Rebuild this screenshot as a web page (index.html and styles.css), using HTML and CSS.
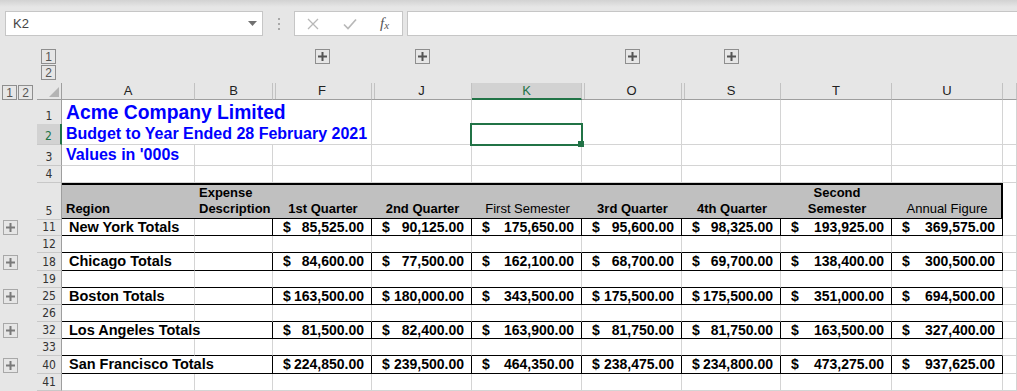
FILE: index.html
```html
<!DOCTYPE html>
<html lang="en">
<head>
  <meta charset="UTF-8">
  <title>Budget to Year Ended 28 February 2021</title>
  <link rel="stylesheet" href="styles.css">
</head>
<body>
  <div class="formula-bar">
    <div class="name-box">
      <span>K2</span>
      <svg class="caret" width="9" height="5" viewBox="0 0 9 5"><path d="M0 0h9L4.5 5z" fill="#707070"/></svg>
    </div>
    <div class="grip"><i></i><i></i><i></i></div>
    <div class="fx-group">
      <svg class="x-icon" width="12" height="12" viewBox="0 0 12 12"><path d="M1 1l10 10M11 1L1 11" stroke="#b8b8b8" stroke-width="1.3"/></svg>
      <svg class="ok-icon" width="14" height="12" viewBox="0 0 14 12"><path d="M1 6.5l4 4L13 1.5" fill="none" stroke="#b8b8b8" stroke-width="1.7"/></svg>
      <span class="fx"><i>f</i><sub>x</sub></span>
    </div>
    <div class="formula-input"></div>
  </div>

  <!-- column outline (grouped columns) -->
  <div class="grid outline">
    <div></div>
    <div class="levels-col"><span class="ob">1</span><span class="ob">2</span></div>
    <div></div>
    <div></div>
    <div class="oc"><span class="ob"><svg width="9" height="9" viewBox="0 0 9 9"><path d="M0 4.5h9M4.5 0v9" stroke="#555" stroke-width="2"/></svg></span></div>
    <div class="oc"><span class="ob"><svg width="9" height="9" viewBox="0 0 9 9"><path d="M0 4.5h9M4.5 0v9" stroke="#555" stroke-width="2"/></svg></span></div>
    <div></div>
    <div class="oc"><span class="ob"><svg width="9" height="9" viewBox="0 0 9 9"><path d="M0 4.5h9M4.5 0v9" stroke="#555" stroke-width="2"/></svg></span></div>
    <div class="oc"><span class="ob"><svg width="9" height="9" viewBox="0 0 9 9"><path d="M0 4.5h9M4.5 0v9" stroke="#555" stroke-width="2"/></svg></span></div>
    <div></div>
    <div></div>
    <div></div>
  </div>

  <div class="sheet">
    <div class="grid row head">
      <div class="gut levels-row"><span class="ob">1</span><span class="ob">2</span></div>
      <div class="corner"><svg width="10" height="10" viewBox="0 0 10 10"><path d="M10 0v10H0z" fill="#b4b4b4"/></svg></div>
      <div class="hd">A</div>
      <div class="hd">B</div>
      <div class="hd split">F</div>
      <div class="hd split">J</div>
      <div class="hd sel">K</div>
      <div class="hd split">O</div>
      <div class="hd split">S</div>
      <div class="hd">T</div>
      <div class="hd">U</div>
      <div class="hd"></div>
    </div>

    <div class="grid row r1">
      <div class="gut"></div>
      <div class="rh">1</div>
      <div class="c title big span3">Acme Company Limited</div>
      <div class="c"></div><div class="c"></div><div class="c"></div><div class="c"></div>
      <div class="c"></div><div class="c"></div><div class="c"></div>
    </div>

    <div class="grid row r2">
      <div class="gut"></div>
      <div class="rh cur-row">2</div>
      <div class="c title span3">Budget to Year Ended 28 February 2021</div>
      <div class="c"></div><div class="c cur"></div><div class="c"></div><div class="c"></div>
      <div class="c"></div><div class="c"></div><div class="c"></div>
    </div>

    <div class="grid row r2">
      <div class="gut"></div>
      <div class="rh">3</div>
      <div class="c title">Values in '000s</div>
      <div class="c"></div><div class="c"></div><div class="c"></div><div class="c"></div><div class="c"></div>
      <div class="c"></div><div class="c"></div><div class="c"></div><div class="c"></div>
    </div>

    <div class="grid row">
      <div class="gut"></div>
      <div class="rh">4</div>
      <div class="c"></div><div class="c"></div><div class="c"></div><div class="c"></div><div class="c"></div>
      <div class="c"></div><div class="c"></div><div class="c"></div><div class="c"></div><div class="c"></div>
    </div>

    <div class="grid row band">
      <div class="gut"></div>
      <div class="rh">5</div>
      <div class="c th">Region</div>
      <div class="c th">Expense<br>Description</div>
      <div class="c th mid">1st Quarter</div>
      <div class="c th mid">2nd Quarter</div>
      <div class="c th mid light">First Semester</div>
      <div class="c th mid">3rd Quarter</div>
      <div class="c th mid">4th Quarter</div>
      <div class="c th mid">Second<br>Semester</div>
      <div class="c th mid light last">Annual Figure</div>
      <div class="c out"></div>
    </div>

    <div class="grid row tot">
      <div class="gut"><span class="ob soft"><svg width="9" height="9" viewBox="0 0 9 9"><path d="M0 4.5h9M4.5 0v9" stroke="#7a7a7a" stroke-width="2"/></svg></span></div>
      <div class="rh">11</div>
      <div class="c name">New York Totals</div>
      <div class="c"></div>
      <div class="c num"><span>$</span><span>85,525.00</span></div>
      <div class="c num"><span>$</span><span>90,125.00</span></div>
      <div class="c num"><span>$</span><span>175,650.00</span></div>
      <div class="c num"><span>$</span><span>95,600.00</span></div>
      <div class="c num"><span>$</span><span>98,325.00</span></div>
      <div class="c num"><span>$</span><span>193,925.00</span></div>
      <div class="c num"><span>$</span><span>369,575.00</span></div>
      <div class="c out"></div>
    </div>

    <div class="grid row gap">
      <div class="gut"></div>
      <div class="rh">12</div>
      <div class="c"></div><div class="c"></div><div class="c"></div><div class="c"></div><div class="c"></div>
      <div class="c"></div><div class="c"></div><div class="c"></div><div class="c"></div><div class="c out"></div>
    </div>

    <div class="grid row tot tall">
      <div class="gut"><span class="ob soft"><svg width="9" height="9" viewBox="0 0 9 9"><path d="M0 4.5h9M4.5 0v9" stroke="#7a7a7a" stroke-width="2"/></svg></span></div>
      <div class="rh">18</div>
      <div class="c name">Chicago Totals</div>
      <div class="c"></div>
      <div class="c num"><span>$</span><span>84,600.00</span></div>
      <div class="c num"><span>$</span><span>77,500.00</span></div>
      <div class="c num"><span>$</span><span>162,100.00</span></div>
      <div class="c num"><span>$</span><span>68,700.00</span></div>
      <div class="c num"><span>$</span><span>69,700.00</span></div>
      <div class="c num"><span>$</span><span>138,400.00</span></div>
      <div class="c num"><span>$</span><span>300,500.00</span></div>
      <div class="c out"></div>
    </div>

    <div class="grid row gap">
      <div class="gut"></div>
      <div class="rh">19</div>
      <div class="c"></div><div class="c"></div><div class="c"></div><div class="c"></div><div class="c"></div>
      <div class="c"></div><div class="c"></div><div class="c"></div><div class="c"></div><div class="c out"></div>
    </div>

    <div class="grid row tot">
      <div class="gut"><span class="ob soft"><svg width="9" height="9" viewBox="0 0 9 9"><path d="M0 4.5h9M4.5 0v9" stroke="#7a7a7a" stroke-width="2"/></svg></span></div>
      <div class="rh">25</div>
      <div class="c name">Boston Totals</div>
      <div class="c"></div>
      <div class="c num"><span>$</span><span>163,500.00</span></div>
      <div class="c num"><span>$</span><span>180,000.00</span></div>
      <div class="c num"><span>$</span><span>343,500.00</span></div>
      <div class="c num"><span>$</span><span>175,500.00</span></div>
      <div class="c num"><span>$</span><span>175,500.00</span></div>
      <div class="c num"><span>$</span><span>351,000.00</span></div>
      <div class="c num"><span>$</span><span>694,500.00</span></div>
      <div class="c out"></div>
    </div>

    <div class="grid row gap">
      <div class="gut"></div>
      <div class="rh">26</div>
      <div class="c"></div><div class="c"></div><div class="c"></div><div class="c"></div><div class="c"></div>
      <div class="c"></div><div class="c"></div><div class="c"></div><div class="c"></div><div class="c out"></div>
    </div>

    <div class="grid row tot">
      <div class="gut"><span class="ob soft"><svg width="9" height="9" viewBox="0 0 9 9"><path d="M0 4.5h9M4.5 0v9" stroke="#7a7a7a" stroke-width="2"/></svg></span></div>
      <div class="rh">32</div>
      <div class="c name span2">Los Angeles Totals</div>
      <div class="c num"><span>$</span><span>81,500.00</span></div>
      <div class="c num"><span>$</span><span>82,400.00</span></div>
      <div class="c num"><span>$</span><span>163,900.00</span></div>
      <div class="c num"><span>$</span><span>81,750.00</span></div>
      <div class="c num"><span>$</span><span>81,750.00</span></div>
      <div class="c num"><span>$</span><span>163,500.00</span></div>
      <div class="c num"><span>$</span><span>327,400.00</span></div>
      <div class="c out"></div>
    </div>

    <div class="grid row gap">
      <div class="gut"></div>
      <div class="rh">33</div>
      <div class="c"></div><div class="c"></div><div class="c"></div><div class="c"></div><div class="c"></div>
      <div class="c"></div><div class="c"></div><div class="c"></div><div class="c"></div><div class="c out"></div>
    </div>

    <div class="grid row tot tall">
      <div class="gut"><span class="ob soft"><svg width="9" height="9" viewBox="0 0 9 9"><path d="M0 4.5h9M4.5 0v9" stroke="#7a7a7a" stroke-width="2"/></svg></span></div>
      <div class="rh">40</div>
      <div class="c name span2">San Francisco Totals</div>
      <div class="c num"><span>$</span><span>224,850.00</span></div>
      <div class="c num"><span>$</span><span>239,500.00</span></div>
      <div class="c num"><span>$</span><span>464,350.00</span></div>
      <div class="c num"><span>$</span><span>238,475.00</span></div>
      <div class="c num"><span>$</span><span>234,800.00</span></div>
      <div class="c num"><span>$</span><span>473,275.00</span></div>
      <div class="c num"><span>$</span><span>937,625.00</span></div>
      <div class="c out"></div>
    </div>

    <div class="grid row">
      <div class="gut"></div>
      <div class="rh">41</div>
      <div class="c"></div><div class="c"></div><div class="c"></div><div class="c"></div><div class="c"></div>
      <div class="c"></div><div class="c"></div><div class="c"></div><div class="c"></div><div class="c"></div>
    </div>
  </div>
</body>
</html>
```

FILE: styles.css
```css
body {
  margin: 0;
  width: 1017px;
  height: 391px;
  overflow: hidden;
  background: #e6e6e6;
  font-family: "Liberation Sans", Arial, sans-serif;
  color: #000;
}

/* formula bar */
.formula-bar {
  display: flex;
  align-items: flex-start;
  height: 44px;
  box-sizing: border-box;
  padding: 11px 0 0 5px;
  background: linear-gradient(#d2d2d2, #e6e6e6 7px);
}

.name-box {
  width: 258px;
  height: 25px;
  box-sizing: border-box;
  border: 1px solid #c6c6c6;
  background: #fff;
  display: flex;
  align-items: center;
  justify-content: space-between;
  padding: 0 5px 0 7px;
  font-size: 13px;
  color: #444;
}

.grip {
  width: 31px;
  height: 25px;
  display: flex;
  flex-direction: column;
  align-items: center;
  justify-content: center;
  gap: 3px;
}

.grip i {
  width: 2px;
  height: 2px;
  background: #a8a8a8;
}

.fx-group {
  width: 109px;
  height: 25px;
  box-sizing: border-box;
  border: 1px solid #c6c6c6;
  background: #fff;
  display: flex;
  align-items: center;
  padding-left: 12px;
  margin-right: 4px;
}

.x-icon {
  margin-right: 24px;
}

.ok-icon {
  margin-right: 23px;
}

.fx {
  font-family: "Liberation Serif", serif;
  font-size: 15px;
  color: #555;
}

.fx sub {
  font-size: 11px;
  font-style: italic;
  vertical-align: -1px;
}

.formula-input {
  flex: 1;
  height: 25px;
  box-sizing: border-box;
  border: 1px solid #c6c6c6;
  border-right: none;
  background: #fff;
}

/* shared column layout */
.grid {
  display: grid;
  grid-template-columns: 37px 25px 133px 78px 99px 100px 110px 100px 99px 111px 111px 1fr;
}

.outline {
  height: 39px;
}

.levels-col {
  display: flex;
  flex-direction: column;
  gap: 1px;
  padding: 5px 0 0 4px;
}

.oc {
  display: flex;
  justify-content: center;
  padding-top: 5px;
}

.ob {
  width: 15px;
  height: 15px;
  box-sizing: border-box;
  border: 1px solid #8e8e8e;
  display: flex;
  align-items: center;
  justify-content: center;
  font-size: 12px;
  color: #555;
}

.ob.soft {
  border-color: #a8a8a8;
}

/* sheet */
.row {
  height: 17px;
}

.row.r1 { height: 24px; }
.row.r2 { height: 21px; }
.row.band { height: 36px; }
.row.tall { height: 18px; }

.gut {
  display: flex;
  align-items: center;
  padding-left: 3px;
}

.levels-row {
  align-items: flex-start;
  gap: 1px;
  padding: 2px 0 0 2px;
}

.corner {
  display: flex;
  align-items: flex-end;
  justify-content: flex-end;
  padding: 0 2px 2px 0;
  box-sizing: border-box;
  border-right: 1px solid #9e9e9e;
  border-bottom: 1px solid #9e9e9e;
}

.hd {
  box-sizing: border-box;
  border-right: 1px solid #c2c2c2;
  border-bottom: 1px solid #9e9e9e;
  text-align: center;
  font-size: 13px;
  line-height: 16px;
  color: #222;
}

.hd.split {
  box-shadow: inset 2px 0 0 #e6e6e6, inset 3px 0 0 #c2c2c2;
}

.hd.sel {
  background: #d2d2d2;
  color: #217346;
  border-bottom: 2px solid #217346;
  line-height: 15px;
}

.rh {
  box-sizing: border-box;
  border-right: 1px solid #9e9e9e;
  border-bottom: 1px solid #c8c8c8;
  display: flex;
  align-items: flex-end;
  justify-content: center;
  font-family: "DejaVu Sans Condensed", "Liberation Sans", sans-serif;
  font-size: 12px;
  line-height: 15px;
  color: #333;
}

.rh.cur-row {
  background: #d2d2d2;
  color: #217346;
  border-right: 2px solid #217346;
}

.c {
  box-sizing: border-box;
  border-right: 1px solid #d4d4d4;
  border-bottom: 1px solid #d4d4d4;
  background: #fff;
  white-space: nowrap;
  min-width: 0;
}

.c.span3 {
  grid-column: span 3;
}

.c.span2 {
  grid-column: span 2;
}

.title {
  color: #0000ff;
  font-weight: bold;
  font-size: 16px;
  line-height: 20px;
  padding-left: 4px;
}

.title.big {
  font-size: 19.3px;
  line-height: 23px;
  padding-top: 1px;
  box-sizing: border-box;
}

.cur {
  position: relative;
}

.cur::after {
  content: "";
  position: absolute;
  left: -2px;
  right: -2px;
  top: -1px;
  bottom: -2px;
  border: 2px solid #217346;
}

.cur::before {
  content: "";
  position: absolute;
  right: -3px;
  bottom: -3px;
  width: 6px;
  height: 6px;
  background: #217346;
  z-index: 1;
}

/* header band (row 5) */
.band .c:not(.out) {
  background: #c0c0c0;
  border-top: 2px solid #000;
  border-bottom: 2px solid #000;
  border-right: none;
}

.band .c.last {
  border-right: 2px solid #000;
}

.th {
  display: flex;
  flex-direction: column;
  justify-content: flex-end;
  padding: 0 3px 1px 4px;
  font-size: 13px;
  font-weight: bold;
  line-height: 16px;
}

.th.mid {
  align-items: center;
  text-align: center;
}

.th.light {
  font-weight: normal;
  font-size: 13px;
}

/* totals rows */
.tot .c:not(.out) {
  border-bottom-color: #000;
}

.tot .c:nth-child(n+4):not(.out),
.tot .c.span2 {
  border-right-color: #000;
}

.gap .c:not(.out) {
  border-bottom-color: #000;
}

.name {
  font-weight: bold;
  font-size: 14.5px;
  line-height: 16px;
  padding-left: 7px;
}

.num {
  display: flex;
  justify-content: space-between;
  padding: 0 7px 0 10px;
  font-weight: bold;
  font-size: 14px;
  line-height: 16px;
}
```
